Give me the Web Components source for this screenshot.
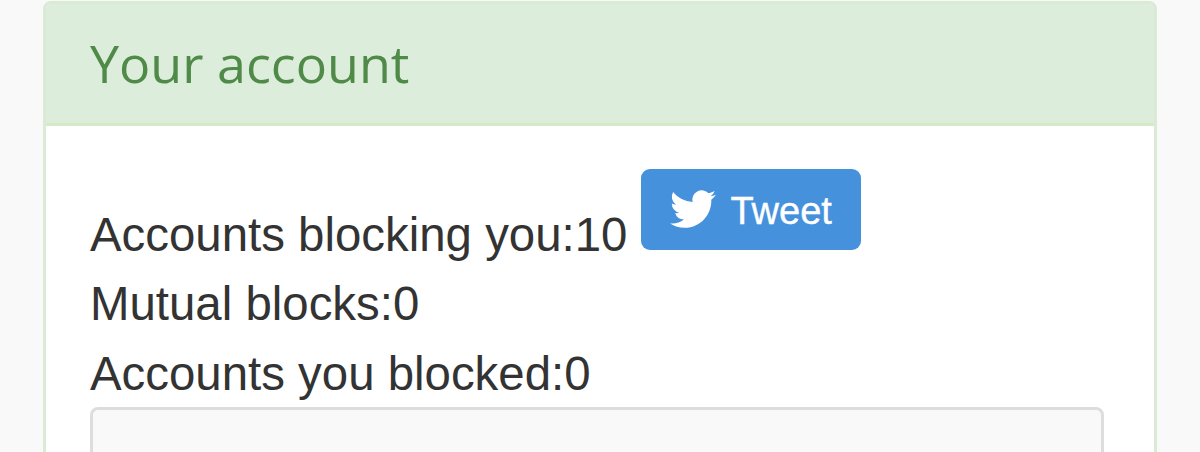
<!DOCTYPE html>
<html>
<head>
<meta charset="utf-8">
<style>
  html, body { margin: 0; height: 100%; overflow: hidden; background: #f9f9f9; }
</style>
</head>
<body>
<account-panel heading="Your account">
  <stat-line>Accounts blocking you:10 <tweet-button>Tweet</tweet-button></stat-line>
  <stat-line>Mutual blocks:0</stat-line>
  <stat-line>Accounts you blocked:0</stat-line>
  <empty-well></empty-well>
</account-panel>

<script>
class AccountPanel extends HTMLElement {
  constructor () {
    super()
    this.shadow = this.attachShadow({ mode: 'open' })
  }

  connectedCallback () {
    this.shadow.innerHTML = /* html */`
    <style>
      :host {
        background: #fff;
        border: 3px solid #d9ead5;
        border-radius: 8px;
        box-sizing: border-box;
        display: block;
        height: 600px;
        margin: 1px 43px 0 43px;
        overflow: hidden;
      }
      header {
        background: #ddeddb;
        border-bottom: 3px solid #d6e9c6;
        box-sizing: border-box;
        color: #4f8a48;
        font-family: 'Open Sans', sans-serif;
        font-size: 52px;
        height: 122px;
        line-height: 118px;
        padding: 0 44px;
      }
      .body {
        padding: 43px 50px 0 44px;
      }
    </style>
    <header>${this.getAttribute('heading')}</header>
    <div class="body"><slot></slot></div>
    `
  }
}

class StatLine extends HTMLElement {
  constructor () {
    super()
    this.shadow = this.attachShadow({ mode: 'open' })
  }

  connectedCallback () {
    this.shadow.innerHTML = /* html */`
    <style>
      :host {
        align-items: flex-end;
        color: #333;
        display: flex;
        font-family: 'Liberation Sans', sans-serif;
        font-size: 47.4px;
        gap: 14px;
        line-height: 69.5px;
        white-space: nowrap;
      }
    </style>
    <slot></slot>
    `
  }
}

class TweetButton extends HTMLElement {
  constructor () {
    super()
    this.shadow = this.attachShadow({ mode: 'open' })
  }

  connectedCallback () {
    this.shadow.innerHTML = /* html */`
    <style>
      :host {
        display: block;
        padding-bottom: 19px;
      }
      a {
        align-items: center;
        background: #4591dc;
        border-radius: 9px;
        box-sizing: border-box;
        color: #fff;
        display: flex;
        font-family: 'Liberation Sans', sans-serif;
        font-size: 38px;
        gap: 14px;
        height: 81px;
        padding: 0 29px;
        -webkit-text-stroke: 0.4px #fff;
        width: 220px;
      }
      svg { flex: none; height: 46px; margin-top: -2px; width: 46px; }
      span { padding-top: 5px; }
    </style>
    <a>
      <svg viewBox="0 0 24 24" fill="#fff"><path d="M23.953 4.57a10 10 0 01-2.825.775 4.958 4.958 0 002.163-2.723c-.951.555-2.005.959-3.127 1.184a4.92 4.92 0 00-8.384 4.482C7.69 8.095 4.067 6.13 1.64 3.162a4.822 4.822 0 00-.666 2.475c0 1.71.87 3.213 2.188 4.096a4.904 4.904 0 01-2.228-.616v.06a4.923 4.923 0 003.946 4.827 4.996 4.996 0 01-2.212.085 4.936 4.936 0 004.604 3.417 9.867 9.867 0 01-6.102 2.105c-.39 0-.779-.023-1.17-.067a13.995 13.995 0 007.557 2.209c9.053 0 13.998-7.496 13.998-13.985 0-.21 0-.42-.015-.63A9.935 9.935 0 0024 4.59z"/></svg>
      <span><slot></slot></span>
    </a>
    `
  }
}

class EmptyWell extends HTMLElement {
  constructor () {
    super()
    this.shadow = this.attachShadow({ mode: 'open' })
  }

  connectedCallback () {
    this.shadow.innerHTML = /* html */`
    <style>
      :host {
        background: #f9f9f9;
        border: 3px solid #ddd;
        border-radius: 8px;
        box-sizing: border-box;
        display: block;
        height: 100px;
        margin-top: -1px;
      }
    </style>
    `
  }
}

customElements.define('account-panel', AccountPanel)
customElements.define('stat-line', StatLine)
customElements.define('tweet-button', TweetButton)
customElements.define('empty-well', EmptyWell)
</script>
</body>
</html>
